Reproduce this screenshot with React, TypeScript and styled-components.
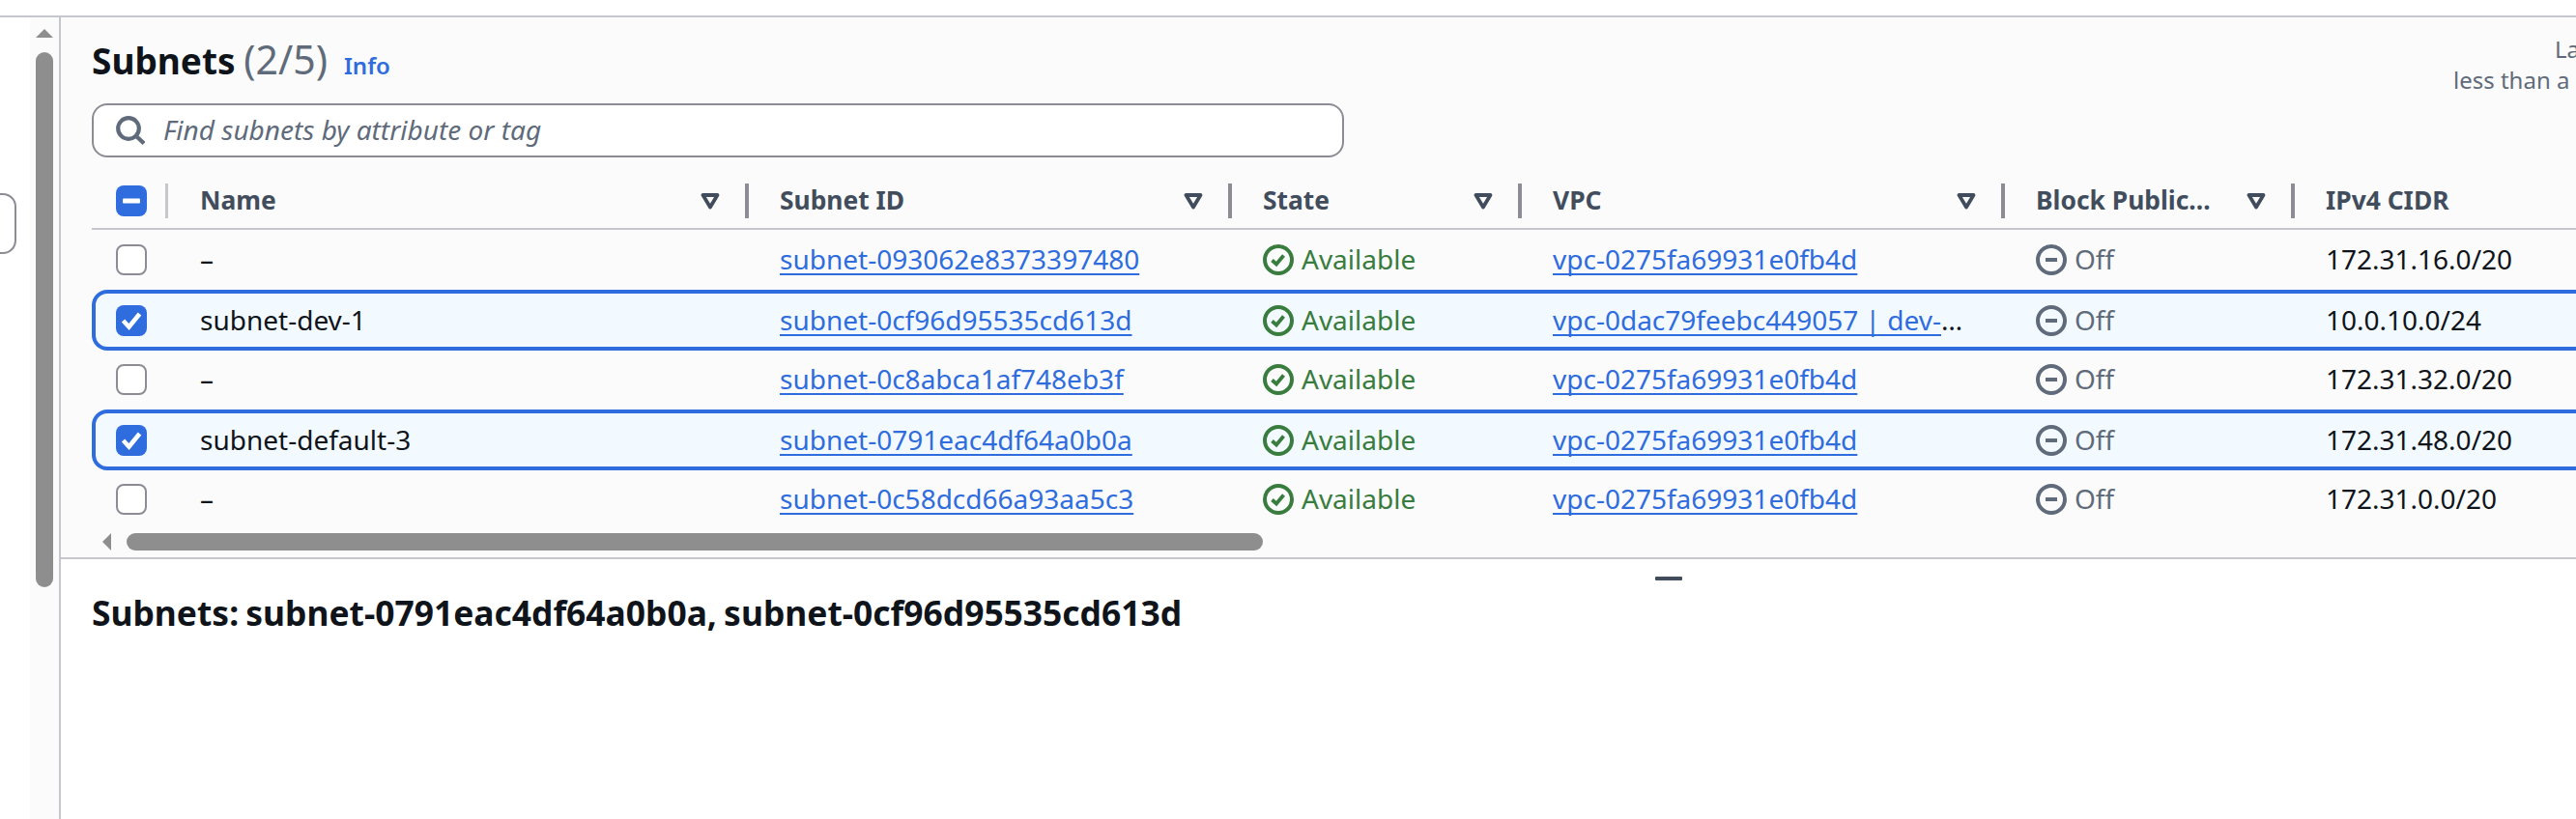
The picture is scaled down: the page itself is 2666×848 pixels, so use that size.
import React from "react";
import styled, { createGlobalStyle, css } from "styled-components";

type Subnet = {
  name: string;
  id: string;
  vpc: string;
  cidr: string;
  selected?: boolean;
};

const subnets: Subnet[] = [
  { name: "–", id: "subnet-093062e8373397480", vpc: "vpc-0275fa69931e0fb4d", cidr: "172.31.16.0/20" },
  { name: "subnet-dev-1", id: "subnet-0cf96d95535cd613d", vpc: "vpc-0dac79feebc449057 | dev-vpc-main", cidr: "10.0.10.0/24", selected: true },
  { name: "–", id: "subnet-0c8abca1af748eb3f", vpc: "vpc-0275fa69931e0fb4d", cidr: "172.31.32.0/20" },
  { name: "subnet-default-3", id: "subnet-0791eac4df64a0b0a", vpc: "vpc-0275fa69931e0fb4d", cidr: "172.31.48.0/20", selected: true },
  { name: "–", id: "subnet-0c58dcd66a93aa5c3", vpc: "vpc-0275fa69931e0fb4d", cidr: "172.31.0.0/20" },
];

const columns = ["Name", "Subnet ID", "State", "VPC", "Block Public...", "IPv4 CIDR"];

const App = () => {
  return (
    <Page>
      <GlobalStyle />
      <TopBar />
      <Body>
        <Gutter>
          <GutterBox />
        </Gutter>
        <ScrollTrack>
          <ArrowUp />
          <ScrollThumb />
        </ScrollTrack>
        <Main>
          <TablePanel>
            <HeadingRow>
              <Heading>
                Subnets <Count>(2/5)</Count>
              </Heading>
              <InfoLink>Info</InfoLink>
              <LastUpdated>
                <span className="first">Last updated</span>
                <span>less than a minute ago</span>
              </LastUpdated>
            </HeadingRow>
            <SearchBox>
              <svg width="30" height="30" viewBox="0 0 30 30" fill="none" stroke="#5f6b7a" strokeWidth="4.2">
                <circle cx="13" cy="13" r="10.8" />
                <path d="M20.5 20.5 L29 28.5" />
              </svg>
              <SearchText>Find subnets by attribute or tag</SearchText>
            </SearchBox>
            <HeaderRow>
              <HeaderCheckCell>
                <CheckBox $on>
                  <svg width="18" height="6" viewBox="0 0 18 6">
                    <rect width="18" height="5" y="0.5" rx="1" fill="#fff" />
                  </svg>
                </CheckBox>
              </HeaderCheckCell>
              {columns.map((col, i) => (
                <HeaderCell key={col} $noDivider={i === columns.length - 1}>
                  <HeaderLabel>{col}</HeaderLabel>
                  {i < columns.length - 1 && (
                    <svg width="20" height="17" viewBox="0 0 20 17" fill="none">
                      <path d="M2.5 2 H17.5 L10 14.5 Z" stroke="#414d5c" strokeWidth="3.8" strokeLinejoin="round" />
                    </svg>
                  )}
                </HeaderCell>
              ))}
            </HeaderRow>
            {subnets.map((s) => (
              <Row key={s.id} $selected={s.selected}>
                <CheckCell>
                  <CheckBox $on={s.selected}>
                    {s.selected && (
                      <svg width="32" height="32" viewBox="0 0 32 32" fill="none">
                        <path d="M7.5 16 L13.5 22.5 L24.5 9" stroke="#fff" strokeWidth="4.6" />
                      </svg>
                    )}
                  </CheckBox>
                </CheckCell>
                <Cell>{s.name}</Cell>
                <Cell>
                  <RowLink>{s.id}</RowLink>
                </Cell>
                <StatusCell $tone="#387c3e">
                  <svg width="32" height="32" viewBox="0 0 32 32" fill="none" stroke="#387c3e">
                    <circle cx="16" cy="16" r="14" strokeWidth="4" />
                    <path d="M9.5 16.5 L14 20.5 L21.5 11.5" strokeWidth="3.8" />
                  </svg>
                  <span>Available</span>
                </StatusCell>
                <VpcCell>
                  <RowLink>{s.vpc}</RowLink>
                </VpcCell>
                <StatusCell $tone="#5f6b7a">
                  <svg width="32" height="32" viewBox="0 0 32 32" fill="none" stroke="#5f6b7a">
                    <circle cx="16" cy="16" r="14" strokeWidth="4" />
                    <path d="M10 16 H22" strokeWidth="4" />
                  </svg>
                  <span>Off</span>
                </StatusCell>
                <Cell>{s.cidr}</Cell>
              </Row>
            ))}
            <HScrollBar>
              <ArrowLeft />
              <HThumb />
            </HScrollBar>
          </TablePanel>
          <DetailPanel>
            <ResizeHandle />
            <DetailTitle>Subnets: subnet-0791eac4df64a0b0a, subnet-0cf96d95535cd613d</DetailTitle>
          </DetailPanel>
        </Main>
      </Body>
    </Page>
  );
};

export default App;

const GlobalStyle = createGlobalStyle`
  html, body {
    margin: 0;
    padding: 0;
    background: #fff;
  }
  body {
    font-family: "Noto Sans", "Open Sans", sans-serif;
    font-size: 28px;
    color: #0f141a;
  }
`;

const gridColumns = css`
  display: grid;
  grid-template-columns: 80px 600px 500px 300px 500px 300px 500px;
  width: 2580px;
`;

const Page = styled.div`
  width: 2666px;
  height: 848px;
  overflow: hidden;
`;

const TopBar = styled.div`
  height: 16px;
  border-bottom: 2px solid #c6c6cd;
`;

const Body = styled.div`
  display: flex;
  height: 830px;
`;

const Gutter = styled.div`
  width: 31px;
  padding-top: 182px;
  box-sizing: border-box;
`;

const GutterBox = styled.div`
  width: 38px;
  height: 63px;
  margin-left: -21px;
  box-sizing: border-box;
  border: 2px solid #8c8c94;
  border-radius: 14px;
  background: #fff;
`;

const ScrollTrack = styled.div`
  width: 30px;
  padding: 12px 0 0 6px;
  box-sizing: border-box;
  background: #fbfbfb;
`;

const ArrowUp = styled.div`
  width: 0;
  height: 0;
  border-left: 9px solid transparent;
  border-right: 9px solid transparent;
  border-bottom: 9px solid #8e8e8e;
`;

const ScrollThumb = styled.div`
  width: 18px;
  height: 554px;
  margin-top: 15px;
  border-radius: 9px;
  background: #8e8e8e;
`;

const Main = styled.div`
  flex: 1;
  min-width: 0;
  border-left: 2px solid #c6c6cd;
  display: flex;
  flex-direction: column;
`;

const TablePanel = styled.div`
  height: 561px;
  padding-left: 32px;
  box-sizing: border-box;
  background: #fbfbfb;
  border-bottom: 2px solid #c6c6cd;
`;

const HeadingRow = styled.div`
  display: flex;
  align-items: baseline;
  height: 66px;
  padding-top: 20px;
  box-sizing: border-box;
  position: relative;
`;

const Heading = styled.h2`
  margin: 0;
  font-size: 37px;
  line-height: 46px;
  font-weight: 700;
  word-spacing: -1px;
  color: #0f141a;
`;

const Count = styled.span`
  font-size: 41px;
  font-weight: 400;
  color: #5f6b7a;
`;

const InfoLink = styled.a`
  margin-left: 17px;
  font-size: 24px;
  font-weight: 600;
  color: #2f6cdd;
`;

const LastUpdated = styled.div`
  position: absolute;
  left: 2444px;
  top: 17px;
  display: flex;
  flex-direction: column;
  font-size: 24px;
  line-height: 32px;
  color: #5f6b7a;
  white-space: nowrap;

  .first {
    padding-left: 105px;
  }
`;

const SearchBox = styled.div`
  display: flex;
  align-items: center;
  gap: 19px;
  width: 1296px;
  height: 56px;
  margin-top: 23px;
  padding: 0 0 0 23px;
  box-sizing: border-box;
  background: #fff;
  border: 2px solid #8c8c94;
  border-radius: 16px;
`;

const SearchText = styled.span`
  margin-bottom: 3px;
  font-style: italic;
  font-size: 28px;
  color: #5f6b7a;
`;

const HeaderRow = styled.div`
  ${gridColumns};
  height: 58px;
  margin-top: 17px;
  border-bottom: 2px solid #c6c6cd;
  box-sizing: border-box;
`;

const HeaderCheckCell = styled.div`
  position: relative;
  display: flex;
  align-items: center;
  padding-left: 25px;

  &::after {
    content: "";
    position: absolute;
    right: 1px;
    top: 10px;
    width: 3px;
    height: 36px;
    background: #c6c6cd;
  }
`;

const HeaderCell = styled.div<{ $noDivider?: boolean }>`
  position: relative;
  display: flex;
  align-items: center;
  padding: 0 30px 0 32px;
  color: #414d5c;
  font-size: 26.4px;
  font-weight: 700;

  ${(p) =>
    !p.$noDivider &&
    css`
      &::after {
        content: "";
        position: absolute;
        right: 0;
        top: 10px;
        width: 4px;
        height: 36px;
        background: #8c8c94;
      }
    `}
`;

const HeaderLabel = styled.span`
  flex: 1;
  min-width: 0;
  margin: 0 0 2px 0;
  white-space: nowrap;
`;

const CheckBox = styled.span<{ $on?: boolean }>`
  display: flex;
  align-items: center;
  justify-content: center;
  width: 32px;
  height: 32px;
  box-sizing: border-box;
  border-radius: 8px;
  background: ${(p) => (p.$on ? "#2f6cdd" : "#fff")};
  border: ${(p) => (p.$on ? "none" : "2px solid #8c8c94")};
`;

const Row = styled.div<{ $selected?: boolean }>`
  ${gridColumns};
  height: 62px;
  ${(p) =>
    p.$selected &&
    css`
      height: 63px;
      margin-bottom: -1px;
      position: relative;
      background: #f3faff;
      border-radius: 16px 0 0 16px;
      box-shadow: inset 0 0 0 4px #2f6cdd;
    `}
`;

const CheckCell = styled.div`
  display: flex;
  align-items: center;
  padding-left: 25px;
`;

const Cell = styled.div`
  display: flex;
  align-items: center;
  padding: 0 0 2px 32px;
  white-space: nowrap;
`;

const StatusCell = styled(Cell)<{ $tone: string }>`
  gap: 8px;
  padding: 0 0 0 32px;
  color: ${(p) => p.$tone};

  span {
    margin-bottom: 2px;
  }
`;

const VpcCell = styled.div`
  align-self: center;
  margin: 0 0 2px 32px;
  max-width: 430px;
  overflow: hidden;
  white-space: nowrap;
  text-overflow: ellipsis;
`;

const RowLink = styled.a`
  color: #2f6cdd;
  text-decoration: underline;
  text-decoration-thickness: 2px;
  text-decoration-skip-ink: none;
  text-underline-offset: 4px;
`;

const HScrollBar = styled.div`
  display: flex;
  align-items: center;
  height: 18px;
  margin-top: 4px;
  padding-left: 11px;
`;

const ArrowLeft = styled.div`
  width: 0;
  height: 0;
  border-top: 9px solid transparent;
  border-bottom: 9px solid transparent;
  border-right: 9px solid #8e8e8e;
`;

const HThumb = styled.div`
  width: 1176px;
  height: 18px;
  margin-left: 16px;
  border-radius: 9px;
  background: #8e8e8e;
`;

const DetailPanel = styled.div`
  flex: 1;
  padding-left: 32px;
  background: #fff;
`;

const ResizeHandle = styled.div`
  width: 28px;
  height: 4px;
  margin: 18px 0 0 1618px;
  border-radius: 1px;
  background: #414d5c;
`;

const DetailTitle = styled.h3`
  margin: 11px 0 0;
  font-size: 35.4px;
  line-height: 44px;
  font-weight: 700;
  word-spacing: -2px;
  color: #0f141a;
`;
